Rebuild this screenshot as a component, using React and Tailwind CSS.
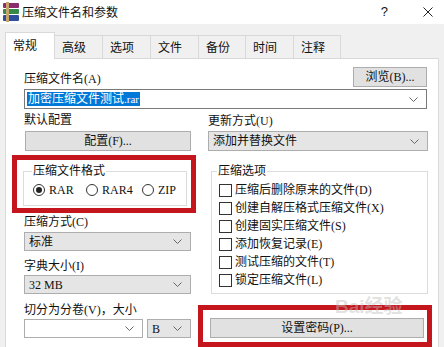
import React from 'react';

const Chevron = () => (
  <svg width="9" height="5" viewBox="0 0 9 5" className="shrink-0">
    <path d="M0.5 0.5 L4.5 4.5 L8.5 0.5" fill="none" stroke="#666" strokeWidth="1" />
  </svg>
);

const Combo = ({ children, white, dark, className = '' }) => (
  <div
    className={`flex items-center justify-between pl-[4px] pr-[8px] border ${
      white ? 'bg-white' : 'bg-[#e5e5e5]'
    } ${dark ? 'border-[#7a7a7a]' : 'border-[#adadad]'} ${className}`}
  >
    <div className="flex items-center leading-[14px]">{children}</div>
    <Chevron />
  </div>
);

const Button = ({ children, className = '' }) => (
  <div
    className={`flex items-center justify-center bg-[#e1e1e1] border border-[#adadad] leading-[14px] ${className}`}
  >
    {children}
  </div>
);

const Label = ({ children, className = '' }) => (
  <div className={`flex items-end leading-[14px] ${className}`}>{children}</div>
);

const Radio = ({ checked, label, className = '' }) => (
  <div className={`flex items-center ${className}`}>
    <span className="w-[12px] h-[12px] rounded-full border border-[#333] bg-white flex items-center justify-center">
      {checked && <span className="w-[6px] h-[6px] rounded-full bg-[#222]" />}
    </span>
    <span className="ml-[4px] leading-[14px]">{label}</span>
  </div>
);

const Check = ({ label }) => (
  <div className="h-[18px] flex items-center">
    <span className="w-[13px] h-[13px] border border-[#333] bg-white" />
    <span className="ml-[3px] leading-[14px]">{label}</span>
  </div>
);

const tabs = ['高级', '选项', '文件', '备份', '时间', '注释'];
const tabW = ['w-[48px]', 'w-[48px]', 'w-[48px]', 'w-[47px]', 'w-[48px]', 'w-[47px]'];

const options = [
  '压缩后删除原来的文件(D)',
  '创建自解压格式压缩文件(X)',
  '创建固实压缩文件(S)',
  '添加恢复记录(E)',
  '测试压缩的文件(T)',
  '锁定压缩文件(L)',
];

export default function App() {
  return (
    <div className="relative w-[444px] h-[347px] overflow-hidden bg-[#f0f0f0] text-[12px] text-[#111] font-['Liberation_Serif','Noto_Sans_CJK_SC',serif]">
      {/* title bar */}
      <div className="h-[24px] bg-white flex items-center pl-[2px] pr-[11px]">
        <svg width="18" height="20" viewBox="0 0 18 20">
          <rect x="1" y="1" width="16" height="5" rx="1" fill="#8a2c6e" />
          <rect x="1" y="7" width="16" height="5" rx="1" fill="#37894a" />
          <rect x="1" y="13" width="16" height="6" rx="1" fill="#2f4f9a" />
          <rect x="4" y="0" width="3" height="20" fill="#c9a46a" />
        </svg>
        <span className="ml-[2px] text-[12px] leading-[14px] font-['Noto_Sans_CJK_SC',sans-serif]">压缩文件名和参数</span>
        <span className="ml-auto text-[13px] font-['Liberation_Sans',sans-serif]">?</span>
        <svg width="10" height="10" viewBox="0 0 10 10" className="ml-[35px]">
          <path d="M0.5 0.5 L9.5 9.5 M9.5 0.5 L0.5 9.5" stroke="#222" strokeWidth="1" />
        </svg>
      </div>

      {/* tabs */}
      <div className="mt-[8px] pl-[5px] flex items-end h-[26px] font-['Noto_Sans_CJK_SC',sans-serif]">
        <div className="relative z-10 w-[50px] h-[27px] -mb-[1px] bg-white border border-b-0 border-[#d9d9d9] pl-[7px] pt-[5px] leading-[14px]">
          常规
        </div>
        {tabs.map((t, i) => (
          <div
            key={t}
            className={`${tabW[i]} h-[23px] bg-[#f0f0f0] border border-l-0 border-b-0 border-[#d9d9d9] pl-[7px] pt-[4px] leading-[14px]`}
          >
            {t}
          </div>
        ))}
      </div>

      {/* panel */}
      <div className="mx-[5px] h-[300px] bg-white border border-[#d9d9d9] pl-[18px] pr-[11px] pt-[7px]">
        <div className="flex justify-between items-end h-[21px]">
          <Label className="pb-[1px]">压缩文件名(A)</Label>
          <Button className="w-[74px] h-[20px]">浏览(B)...</Button>
        </div>
        <Combo white dark className="mt-[2px] h-[20px] !pl-[2px]">
          <span className="bg-[#0078d7] text-white px-[1px]">
            加密压缩文件测试<span className="text-[11px]">.rar</span>
          </span>
        </Combo>

        <div className="grid grid-cols-[167px_220px] gap-x-[17px]">
          {/* left column */}
          <div className="flex flex-col">
            <Label className="h-[22px] pb-[4px]">默认配置</Label>
            <Button className="h-[20px] ml-[1px]">配置(F)...</Button>
            <fieldset className="mt-[13px] -ml-[1px] w-[164px] border border-[#dcdcdc] pb-[6px]">
              <legend className="ml-[8px] px-[1px] leading-[14px]">压缩文件格式</legend>
              <div className="mt-[3px] h-[18px] pl-[9px] flex items-center">
                <Radio checked label="RAR" className="w-[53px]" />
                <Radio label="RAR4" className="w-[56px]" />
                <Radio label="ZIP" />
              </div>
            </fieldset>
            <Label className="h-[26px] pb-[3px]">压缩方式(C)</Label>
            <Combo className="h-[19px]">标准</Combo>
            <Label className="h-[24px] pb-[2px]">字典大小(I)</Label>
            <Combo className="h-[19px]">32 MB</Combo>
            <Label className="h-[25px] pb-[2px]">切分为分卷(V)，大小</Label>
            <div className="flex h-[19px]">
              <Combo white className="w-[119px]" />
              <Combo className="w-[44px] ml-[4px]">B</Combo>
            </div>
          </div>

          {/* right column */}
          <div className="flex flex-col">
            <Label className="h-[22px] pb-[3px]">更新方式(U)</Label>
            <Combo className="h-[20px]">添加并替换文件</Combo>
            <fieldset className="mt-[13px] ml-[3px] w-[217px] border border-[#dcdcdc] pb-[4px]">
              <legend className="ml-[5px] px-[1px] leading-[14px]">压缩选项</legend>
              <div className="pt-[3px] pl-[7px]">
                {options.map((o) => (
                  <Check key={o} label={o} />
                ))}
              </div>
            </fieldset>
            <Button className="mt-[24px] ml-[2px] w-[214px] h-[20px]">设置密码(P)...</Button>
          </div>
        </div>
      </div>

      {/* annotation boxes */}
      <div className="absolute left-[12px] top-[155px] w-[184px] h-[58px] border-[5px] border-[#c4161c]" />
      <div className="absolute left-[198px] top-[305px] w-[234px] h-[42px] border-[5px] border-[#c4161c]" />
      <div className="absolute left-[335px] top-[293px] text-[19px] font-bold text-[rgba(190,190,190,0.45)] font-['Liberation_Sans','Noto_Sans_CJK_SC',sans-serif]">
        Bai经验
      </div>
    </div>
  );
}
